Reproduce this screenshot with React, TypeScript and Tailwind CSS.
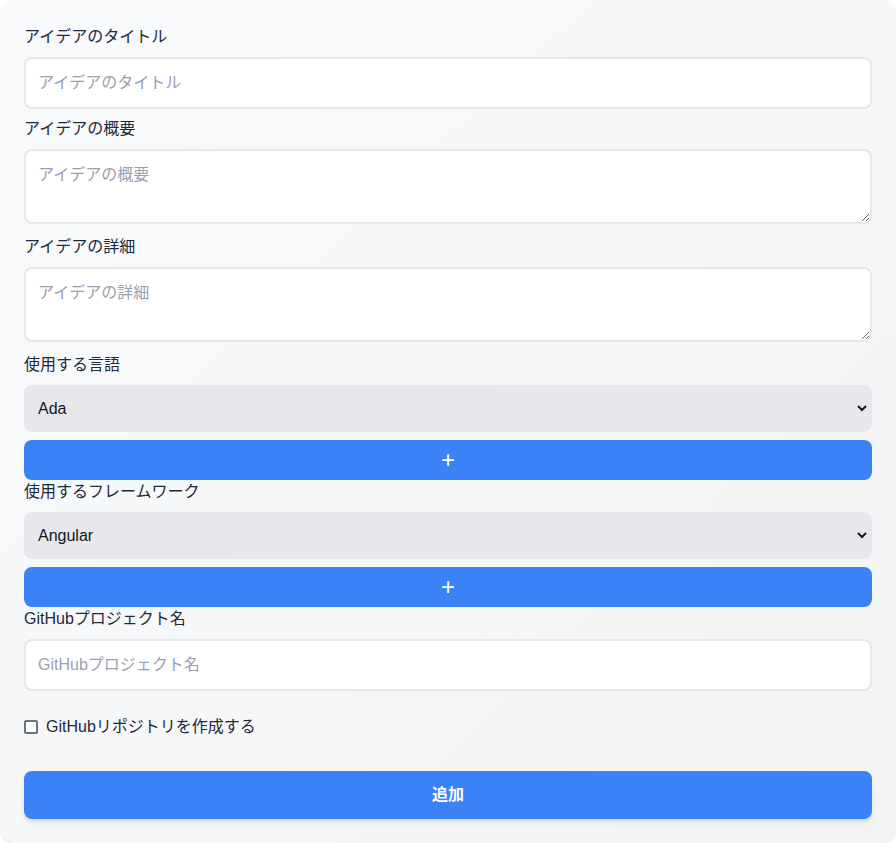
import React, { useState } from 'react';

const languages = ['Ada', 'C', 'C++', 'Go', 'Java', 'JavaScript', 'Python', 'Ruby', 'Rust', 'TypeScript'];
const frameworks = ['Angular', 'Django', 'Express', 'Flask', 'Next.js', 'React', 'Rails', 'Vue'];

const font = { fontFamily: '"Liberation Sans", "Noto Sans CJK JP", sans-serif' };

const App: React.FC = () => {
  const [lang, setLang] = useState('Ada');
  const [fw, setFw] = useState('Angular');
  const [createRepo, setCreateRepo] = useState(false);

  const inputCls =
    'w-full border-2 border-gray-200 bg-white rounded-lg px-3 py-3 text-base text-gray-800 placeholder:text-gray-400 focus:outline-none';
  const labelCls = 'block mb-2 text-base text-gray-800 leading-6';
  const selectCls =
    'block w-full border-2 border-[#e8e7ec] bg-[#e8e7ec] rounded-lg py-3 px-2 text-base text-gray-900 focus:outline-none';
  const plusCls =
    'block w-full h-10 mt-2 bg-[#3b82f6] hover:bg-blue-600 text-white text-2xl leading-none rounded-lg';

  return (
    <div className="min-h-screen bg-white" style={font}>
      <form
        className="w-full rounded-2xl bg-gradient-to-br from-gray-50 to-gray-100 px-6 pt-[25px] pb-6 shadow-sm"
        onSubmit={(e) => e.preventDefault()}
      >
        <div className="mb-2">
          <label className={labelCls}>アイデアのタイトル</label>
          <input type="text" placeholder="アイデアのタイトル" className={'block ' + inputCls} />
        </div>

        <div className="mb-2">
          <label className={labelCls}>アイデアの概要</label>
          <textarea placeholder="アイデアの概要" className={inputCls + ' h-[75px] align-bottom mb-[3px]'} />
        </div>

        <div className="mb-2">
          <label className={labelCls}>アイデアの詳細</label>
          <textarea placeholder="アイデアの詳細" className={inputCls + ' h-[75px] align-bottom mb-[3px]'} />
        </div>

        <div>
          <label className={labelCls}>使用する言語</label>
          <select value={lang} onChange={(e) => setLang(e.target.value)} className={selectCls}>
            {languages.map((l) => (
              <option key={l}>{l}</option>
            ))}
          </select>
          <button type="button" className={plusCls}>+</button>
        </div>

        <div>
          <label className={labelCls}>使用するフレームワーク</label>
          <select value={fw} onChange={(e) => setFw(e.target.value)} className={selectCls}>
            {frameworks.map((f) => (
              <option key={f}>{f}</option>
            ))}
          </select>
          <button type="button" className={plusCls}>+</button>
        </div>

        <div>
          <label className={labelCls}>GitHubプロジェクト名</label>
          <input type="text" placeholder="GitHubプロジェクト名" className={'block ' + inputCls} />
        </div>

        <label className="flex items-center mt-6 text-base text-gray-800 leading-6">
          <input
            type="checkbox"
            checked={createRepo}
            onChange={(e) => setCreateRepo(e.target.checked)}
            className="appearance-none w-[14px] h-[14px] border-2 border-gray-500 rounded-[2px] bg-white checked:bg-[#3b82f6] checked:border-[#3b82f6]"
          />
          <span className="ml-2">GitHubリポジトリを作成する</span>
        </label>

        <button
          type="submit"
          className="block w-full mt-8 py-3 bg-[#3b82f6] hover:bg-blue-600 text-white font-bold text-base leading-6 rounded-lg shadow-md"
        >
          追加
        </button>
      </form>
    </div>
  );
};

export default App;
